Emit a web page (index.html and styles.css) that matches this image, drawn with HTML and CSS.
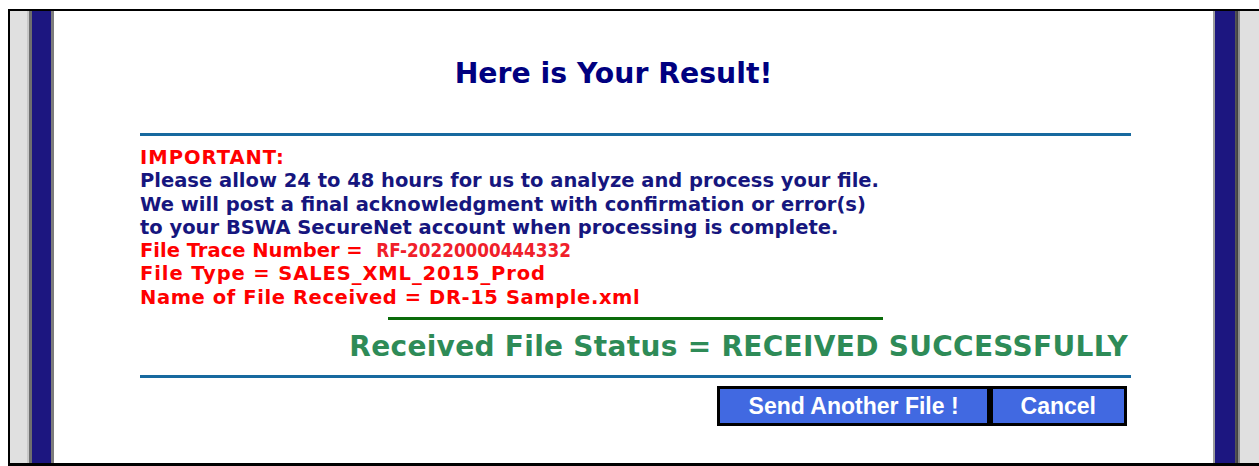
FILE: index.html
```html
<!DOCTYPE html>
<html lang="en">
<head>
<meta charset="utf-8">
<title>File Upload Result</title>
<link rel="stylesheet" href="styles.css">
</head>
<body>
<div class="frame">
  <div class="strip"></div>
  <div class="rail rail-left"></div>
  <main class="page">
    <h1 class="title">Here is Your Result!</h1>
    <hr class="rule rule-blue rule-top">
    <div class="notice">
      <p class="warn heading">IMPORTANT:</p>
      <p class="info">Please allow 24 to 48 hours for us to analyze and process your file.<br>
        We will post a final acknowledgment with confirmation or error(s)<br>
        to your BSWA SecureNet account when processing is complete.</p>
      <p class="warn">File Trace Number = &nbsp;<span class="trace">RF-20220000444332</span></p>
      <p class="warn file-type">File Type = SALES_XML_2015_Prod</p>
      <p class="warn file-name">Name of File Received = DR-15 Sample.xml</p>
    </div>
    <hr class="rule rule-green">
    <p class="status">Received File Status = RECEIVED SUCCESSFULLY</p>
    <hr class="rule rule-blue rule-bottom">
    <div class="actions">
      <button class="btn btn-send" type="button">Send Another File !</button><button class="btn btn-cancel" type="button">Cancel</button>
    </div>
  </main>
  <div class="rail rail-right"></div>
  <div class="strip strip-right"></div>
</div>
</body>
</html>
```

FILE: styles.css
```css
html, body {
  margin: 0;
  padding: 0;
  background: #ffffff;
}

body {
  padding: 9px 0 0 8px;
  overflow: hidden;
}

/* outer window with its dark edge */
.frame {
  display: flex;
  height: 452px;
  border-top: 2px solid #000;
  border-left: 2px solid #000;
  border-bottom: 3px solid #000;
}

.strip {
  width: 17px;
  flex: none;
  background: #e0e0e0;
}

.strip-right {
  width: 19px;
}

/* navy side rails with bevelled edges */
.rail {
  width: 27px;
  flex: none;
}

.rail-left {
  background: linear-gradient(to right,
    #c8c8c8 0, #c8c8c8 2px,
    #6e6e6e 2px, #6e6e6e 5px,
    #1c1680 5px, #1c1680 24px,
    #7c7c7c 24px, #7c7c7c 27px);
}

.rail-right {
  background: linear-gradient(to right,
    #9c9c9c 0, #9c9c9c 2px,
    #1c1680 2px, #1c1680 22px,
    #5a5a5a 22px, #3c3c3c 25px,
    #8a8a8a 25px, #8a8a8a 27px);
}

.page {
  flex: 1;
  padding: 0 82px 0 86px;
  background: #fff;
  font-family: "DejaVu Sans", Verdana, sans-serif;
  font-weight: bold;
}

.title {
  margin: 46px 0 0;
  padding-right: 44px;
  height: 34px;
  line-height: 34px;
  font-size: 28.3px;
  color: #000080;
  text-align: center;
}

.rule {
  margin: 0;
  border: 0;
  height: 3px;
}

.rule-blue {
  background: #17699f;
}

.rule-top {
  margin-top: 42px;
}

.rule-bottom {
  margin-top: 13px;
}

.rule-green {
  width: 50%;
  margin: 8px auto 0;
  background: #0a6b0a;
}

.notice {
  margin-top: 10px;
  font-size: 19.5px;
  line-height: 23.3px;
}

.notice p {
  margin: 0;
}

.warn {
  color: #ff0000;
}

.heading {
  letter-spacing: 1px;
}

.file-type {
  letter-spacing: 0.9px;
}

.file-name {
  letter-spacing: 0.6px;
}

.info {
  color: #16167e;
}

.trace {
  font-family: "DejaVu Sans Condensed", "DejaVu Sans", sans-serif;
  font-size: 18.7px;
  letter-spacing: 0;
  color: #f0202a;
}

.status {
  margin: 11px 3px 0 0;
  font-size: 28px;
  line-height: 31px;
  letter-spacing: 0.3px;
  color: #2e8b57;
  text-align: right;
}

.actions {
  display: flex;
  justify-content: flex-end;
  margin: 8px 4px 0 0;
}

.btn {
  height: 40px;
  border: 3px solid #000;
  background: #4169e1;
  color: #fff;
  font-family: "Liberation Sans", Arial, sans-serif;
  font-weight: bold;
  font-size: 23px;
  line-height: 30px;
  cursor: pointer;
}

.btn-send {
  padding: 0 28px 0 29px;
}

.btn-cancel {
  padding: 0 28px;
}
```
